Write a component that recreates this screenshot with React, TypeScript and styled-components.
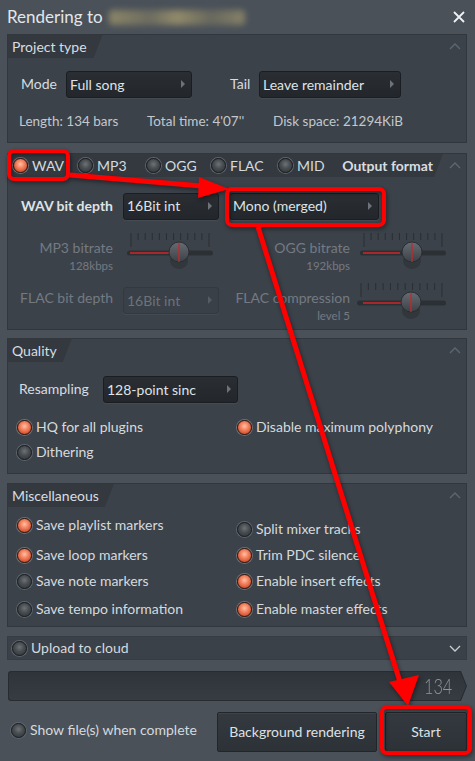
import React, { useId } from "react";
import styled, { createGlobalStyle } from "styled-components";

const FONT = `Lato, "Noto Sans", "DejaVu Sans", sans-serif`;

const GlobalStyle = createGlobalStyle`
  html, body { margin: 0; padding: 0; background: #4a5159; }
  body { font-family: ${FONT}; -webkit-font-smoothing: antialiased; }
  * { box-sizing: border-box; }
`;

const Window = styled.div`
  position: relative;
  width: 475px;
  height: 761px;
  padding: 0 8px 0 7px;
  background: #4a5159;
  color: #d7dce0;
  font-family: ${FONT};
  font-size: 14px;
  display: flex;
  flex-direction: column;
  overflow: hidden;
`;

const TitleBar = styled.header`
  height: 34px;
  flex-shrink: 0;
  display: flex;
  align-items: center;
`;

const Title = styled.h1`
  margin: 0 0 2px;
  font-size: 17px;
  font-weight: 400;
  color: #e2e6ea;
`;

const Blurred = styled.span`
  margin-left: 6px;
  width: 136px;
  height: 15px;
  border-radius: 4px;
  background: linear-gradient(
    90deg,
    rgba(168, 156, 110, 0.7),
    rgba(150, 142, 105, 0.45) 30%,
    rgba(170, 158, 112, 0.75) 50%,
    rgba(140, 132, 100, 0.45) 75%,
    rgba(160, 150, 110, 0.7)
  );
  filter: blur(3px);
`;

const CloseBtn = styled.span`
  margin-left: auto;
  margin-right: 1px;
  width: 14px;
  height: 14px;
  display: flex;
  align-items: center;
  justify-content: center;
`;

const Panel = styled.section<{ $mt?: number; $h: number }>`
  margin-top: ${(p) => p.$mt ?? 0}px;
  height: ${(p) => p.$h}px;
  flex-shrink: 0;
  background: #3c424a;
  border: 1px solid #32373d;
  display: flex;
  flex-direction: column;
`;

const PanelHead = styled.div`
  height: 23px;
  flex-shrink: 0;
  display: flex;
  align-items: stretch;
`;

const Tab = styled.div<{ $grow?: boolean; $pr?: number }>`
  display: flex;
  align-items: center;
  flex: ${(p) => (p.$grow ? 1 : "none")};
  padding: 0 ${(p) => p.$pr ?? 15}px 1px 4px;
  background: #343940;
  clip-path: polygon(0 0, 100% 0, calc(100% - 9px) 100%, 0 100%);
  font-size: 14px;
  color: #d8dde1;
`;

const TabTitle = styled.span<{ $bold?: boolean }>`
  margin-left: ${(p) => (p.$bold ? "auto" : "0")};
  font-weight: ${(p) => (p.$bold ? 700 : 400)};
`;

const Collapse = styled.span`
  margin-left: auto;
  width: 23px;
  display: flex;
  align-items: center;
  justify-content: center;
`;

const Chevron = ({ down }: { down?: boolean }) => (
  <svg width="12" height="7" viewBox="0 0 12 7">
    <polyline
      points={down ? "1,1 6,6 11,1" : "1,6 6,1 11,6"}
      fill="none"
      stroke={down ? "#c9ced3" : "#5e666f"}
      strokeWidth="1.3"
    />
  </svg>
);

/* ---------- form parts ---------- */

const Select = styled.div<{ $w: number; $disabled?: boolean }>`
  width: ${(p) => p.$w}px;
  height: 27px;
  display: flex;
  align-items: center;
  justify-content: space-between;
  padding: 0 6px 1px 3px;
  background: ${(p) =>
    p.$disabled ? "#394047" : "linear-gradient(#2a2e33, #23272b)"};
  border: 1px solid ${(p) => (p.$disabled ? "#333940" : "#1a1d21")};
  box-shadow: 0 1px 0 rgba(255, 255, 255, 0.05);
  border-radius: 3px;
  color: ${(p) => (p.$disabled ? "#6c737a" : "#dfe3e7")};
  font-size: 14px;
  white-space: nowrap;
`;

const Caret = styled.span<{ $disabled?: boolean }>`
  width: 0;
  height: 0;
  border-top: 4px solid transparent;
  border-bottom: 4px solid transparent;
  border-left: 4px solid ${(p) => (p.$disabled ? "#555c63" : "#6c737a")};
`;

const Dropdown = ({
  w,
  value,
  disabled,
}: {
  w: number;
  value: string;
  disabled?: boolean;
}) => (
  <Select $w={w} $disabled={disabled}>
    <span>{value}</span>
    <Caret $disabled={disabled} />
  </Select>
);

const FieldLabel = styled.span<{ $w: number }>`
  width: ${(p) => p.$w}px;
  flex-shrink: 0;
  margin-bottom: 2px;
  color: #d7dce0;
  font-size: 14px;
`;

const ModeRow = styled.div`
  margin-top: 13px;
  height: 27px;
  padding-left: 13px;
  display: flex;
  align-items: center;
`;

const Field = styled.div<{ $ml?: number }>`
  display: flex;
  align-items: center;
  margin-left: ${(p) => p.$ml ?? 0}px;
`;

const InfoRow = styled.div`
  margin-top: 15px;
  padding-left: 11px;
  display: grid;
  grid-template-columns: 128px 126px auto;
  font-size: 13.5px;
  color: #c2c8cd;
`;

/* radios */

const Dot = styled.span<{ $on?: boolean }>`
  width: 15px;
  height: 15px;
  flex-shrink: 0;
  border-radius: 50%;
  border: 1px solid ${(p) => (p.$on ? "#3a1a12" : "#1c1f23")};
  box-shadow: 0 0 0 1px ${(p) => (p.$on ? "#6e6f72" : "#5d646b")};
  background: ${(p) =>
    p.$on
      ? "radial-gradient(circle at 50% 40%, #ffc0a6 0%, #f58764 35%, #d4502f 75%, #a83a22 100%)"
      : "radial-gradient(circle at 50% 40%, #6c7276 0%, #474c51 45%, #2d3135 100%)"};
`;

const Check = styled.label<{ $mt?: number }>`
  display: flex;
  align-items: center;
  gap: 4px;
  height: 22px;
  margin-top: ${(p) => p.$mt ?? 0}px;
  color: #d5dade;
  font-size: 14px;
  white-space: nowrap;
`;

const CheckText = styled.span`
  margin-bottom: 2px;
`;

const Radio = ({
  on,
  label,
  mt,
}: {
  on?: boolean;
  label: string;
  mt?: number;
}) => (
  <Check $mt={mt}>
    <Dot $on={on} />
    <CheckText>{label}</CheckText>
  </Check>
);

const FormatTabs = styled.div`
  display: flex;
  align-items: center;
  margin-left: 1px;
`;

const FormatItem = styled.div<{ $w: number }>`
  width: ${(p) => p.$w}px;
  display: flex;
  align-items: center;
  gap: 4px;
  color: #d5dade;
`;

const FormRow = styled.div<{ $mt: number; $h: number }>`
  margin-top: ${(p) => p.$mt}px;
  height: ${(p) => p.$h}px;
  padding-left: 9px;
  display: grid;
  grid-template-columns: 96px 96px 121px 86px;
  grid-template-rows: ${(p) => p.$h}px;
  column-gap: 10px;
  align-items: center;
`;

const BoldLabel = styled.span`
  justify-self: end;
  margin-bottom: 2px;
  font-weight: 700;
  color: #dfe3e7;
  white-space: nowrap;
`;

const LabelStack = styled.div<{ $mt: number }>`
  align-self: start;
  margin-top: ${(p) => p.$mt}px;
  display: flex;
  flex-direction: column;
  align-items: flex-end;
  white-space: nowrap;
  color: #737a82;
`;

const MainLabel = styled.span`
  line-height: 20px;
  font-size: 14px;
`;

const SubLabel = styled.span`
  margin-top: 1px;
  line-height: 14px;
  font-size: 11.5px;
`;

const SliderBox = styled.div<{ $dx?: number; $dy?: number }>`
  align-self: start;
  margin-left: ${(p) => p.$dx ?? 0}px;
  margin-top: ${(p) => p.$dy ?? 0}px;
  height: 44px;
`;

const Slider = ({
  w,
  knob,
  fill,
}: {
  w: number;
  knob: number;
  fill: [number, number];
}) => {
  const id = useId().replace(/:/g, "");
  const ticks = [];
  const n = 12;
  for (let i = 0; i < n; i++) {
    const x = 4 + (i * (w - 8)) / (n - 1);
    const long = i === 0 || i === n - 1;
    ticks.push(
      <line
        key={i}
        x1={x}
        x2={x}
        y1={1}
        y2={long ? 15 : 8}
        stroke="#2a2f34"
        strokeWidth="1"
      />
    );
  }
  return (
    <svg width={w} height={44} viewBox={`0 0 ${w} 44`}>
      <defs>
        <linearGradient id={`k${id}`} x1="0" y1="0" x2="0" y2="1">
          <stop offset="0" stopColor="#666c73" />
          <stop offset="1" stopColor="#3c4147" />
        </linearGradient>
      </defs>
      {ticks}
      <rect x="0" y="18.5" width={w} height="5" rx="2.5" fill="#2b3035" />
      <rect x={fill[0]} y="20" width={fill[1] - fill[0]} height="2" fill="#a8272b" />
      <rect x={knob - 9} y="20" width="18" height="17" rx="9" fill="#30353a" opacity="0.85" />
      <circle cx={knob} cy="20" r="10" fill={`url(#k${id})`} stroke="#2a2e33" strokeWidth="1" />
      <line x1={knob} x2={knob} y1="11" y2="30" stroke="#c5282b" strokeWidth="1.3" />
    </svg>
  );
};

/* quality / misc */

const ResRow = styled.div`
  margin-top: 14px;
  height: 27px;
  padding-left: 11px;
  display: flex;
  align-items: center;
`;

const TwoCols = styled.div<{ $mt: number }>`
  margin-top: ${(p) => p.$mt}px;
  padding-left: 9px;
  display: grid;
  grid-template-columns: 220px 1fr;
  row-gap: 3px;
`;

const Stack = styled.div`
  display: flex;
  flex-direction: column;
`;

/* bottom */

const UploadRow = styled.div`
  margin-top: 9px;
  height: 24px;
  flex-shrink: 0;
  background: #3b4148;
  border: 1px solid #363c42;
  display: flex;
  align-items: center;
  padding-left: 4px;
`;

const ProgressOuter = styled.div`
  margin-top: 11px;
  margin-left: 1px;
  height: 30px;
  flex-shrink: 0;
  padding: 1px;
  background: #282c31;
  border-radius: 3px 0 0 3px;
  clip-path: polygon(0 0, calc(100% - 6px) 0, 100% 50%, calc(100% - 6px) 100%, 0 100%);
`;

const ProgressInner = styled.div`
  height: 100%;
  border-radius: 3px 0 0 3px;
  background: linear-gradient(#2f343a, #373c42);
  clip-path: polygon(0 0, calc(100% - 6px) 0, 100% 50%, calc(100% - 6px) 100%, 0 100%);
  display: flex;
  align-items: center;
  justify-content: flex-end;
  padding-right: 14px;
`;

const Count = styled.span`
  display: inline-block;
  font-size: 22px;
  font-weight: 300;
  color: #8e959c;
  transform: scaleX(0.74);
  transform-origin: right center;
  margin-bottom: 2px;
`;

const BottomRow = styled.div`
  margin-top: 11px;
  height: 40px;
  flex-shrink: 0;
  display: flex;
  align-items: center;
  padding-left: 4px;
`;

const ShowFiles = styled.div`
  margin-bottom: 3px;
  margin-right: auto;
`;

const Button = styled.button<{ $w: number; $ml: number }>`
  width: ${(p) => p.$w}px;
  height: 40px;
  margin-left: ${(p) => p.$ml}px;
  padding: 0 0 2px;
  background: linear-gradient(#343940, #2d3237);
  border: 1px solid #22262a;
  border-radius: 2px;
  box-shadow: inset 0 1px 0 rgba(255, 255, 255, 0.05);
  color: #dde1e5;
  font-family: ${FONT};
  font-size: 14px;
`;

const Overlay = styled.svg`
  position: absolute;
  left: 0;
  top: 0;
  pointer-events: none;
  filter: drop-shadow(1px 2px 2px rgba(0, 0, 0, 0.45));
`;

const RED = "#ff0000";

export default function App() {
  return (
    <>
      <GlobalStyle />
      <Window>
        <TitleBar>
          <Title>Rendering to</Title>
          <Blurred />
          <CloseBtn>
            <svg width="12" height="12" viewBox="0 0 12 12">
              <path d="M1 1 L11 11 M11 1 L1 11" stroke="#eef1f3" strokeWidth="1.8" />
            </svg>
          </CloseBtn>
        </TitleBar>

        <Panel $h={109}>
          <PanelHead>
            <Tab $pr={16}>
              <TabTitle>Project type</TabTitle>
            </Tab>
            <Collapse>
              <Chevron />
            </Collapse>
          </PanelHead>
          <ModeRow>
            <Field>
              <FieldLabel $w={45}>Mode</FieldLabel>
              <Dropdown w={126} value="Full song" />
            </Field>
            <Field $ml={38}>
              <FieldLabel $w={29}>Tail</FieldLabel>
              <Dropdown w={142} value="Leave remainder" />
            </Field>
          </ModeRow>
          <InfoRow>
            <span>Length: 134 bars</span>
            <span>Total time: 4'07''</span>
            <span>Disk space: 21294KiB</span>
          </InfoRow>
        </Panel>

        <Panel $mt={10} $h={177}>
          <PanelHead>
            <Tab $grow $pr={10}>
              <FormatTabs>
                <FormatItem $w={65}>
                  <Dot $on />
                  <span>WAV</span>
                </FormatItem>
                <FormatItem $w={68}>
                  <Dot />
                  <span>MP3</span>
                </FormatItem>
                <FormatItem $w={65}>
                  <Dot />
                  <span>OGG</span>
                </FormatItem>
                <FormatItem $w={67}>
                  <Dot />
                  <span>FLAC</span>
                </FormatItem>
                <FormatItem $w={50}>
                  <Dot />
                  <span>MID</span>
                </FormatItem>
              </FormatTabs>
              <TabTitle $bold>Output format</TabTitle>
            </Tab>
            <Collapse>
              <Chevron />
            </Collapse>
          </PanelHead>

          <FormRow $mt={16} $h={26}>
            <BoldLabel>WAV bit depth</BoldLabel>
            <Dropdown w={96} value="16Bit int" />
            <Dropdown w={150} value="Mono (merged)" />
          </FormRow>

          <FormRow $mt={13} $h={44}>
            <LabelStack $mt={6}>
              <MainLabel>MP3 bitrate</MainLabel>
              <SubLabel>128kbps</SubLabel>
            </LabelStack>
            <SliderBox $dx={4}>
              <Slider w={86} knob={52} fill={[3, 43]} />
            </SliderBox>
            <LabelStack $mt={6}>
              <MainLabel>OGG bitrate</MainLabel>
              <SubLabel>192kbps</SubLabel>
            </LabelStack>
            <SliderBox>
              <Slider w={86} knob={52} fill={[3, 40]} />
            </SliderBox>
          </FormRow>

          <FormRow $mt={11} $h={27}>
            <LabelStack $mt={1}>
              <MainLabel>FLAC bit depth</MainLabel>
            </LabelStack>
            <Dropdown w={96} value="16Bit int" disabled />
            <LabelStack $mt={1}>
              <MainLabel>FLAC compression</MainLabel>
              <SubLabel>level 5</SubLabel>
            </LabelStack>
            <SliderBox $dx={-3} $dy={-5}>
              <Slider w={89} knob={54} fill={[6, 45]} />
            </SliderBox>
          </FormRow>
        </Panel>

        <Panel $mt={8} $h={136}>
          <PanelHead>
            <Tab $pr={15}>
              <TabTitle>Quality</TabTitle>
            </Tab>
            <Collapse>
              <Chevron />
            </Collapse>
          </PanelHead>
          <ResRow>
            <FieldLabel $w={84}>Resampling</FieldLabel>
            <Dropdown w={135} value="128-point sinc" />
          </ResRow>
          <TwoCols $mt={13}>
            <Radio on label="HQ for all plugins" />
            <Radio on label="Disable maximum polyphony" />
            <Radio label="Dithering" />
          </TwoCols>
        </Panel>

        <Panel $mt={9} $h={144}>
          <PanelHead>
            <Tab $pr={15}>
              <TabTitle>Miscellaneous</TabTitle>
            </Tab>
            <Collapse>
              <Chevron />
            </Collapse>
          </PanelHead>
          <TwoCols $mt={0}>
            <Stack>
              <Radio on label="Save playlist markers" mt={7} />
              <Radio on label="Save loop markers" mt={8} />
              <Radio label="Save note markers" mt={4} />
              <Radio label="Save tempo information" mt={6} />
            </Stack>
            <Stack>
              <Radio label="Split mixer tracks" mt={11} />
              <Radio on label="Trim PDC silence" mt={4} />
              <Radio on label="Enable insert effects" mt={4} />
              <Radio on label="Enable master effects" mt={6} />
            </Stack>
          </TwoCols>
        </Panel>

        <UploadRow>
          <Radio label="Upload to cloud" />
          <Collapse>
            <Chevron down />
          </Collapse>
        </UploadRow>

        <ProgressOuter>
          <ProgressInner>
            <Count>134</Count>
          </ProgressInner>
        </ProgressOuter>

        <BottomRow>
          <ShowFiles>
            <Radio label="Show file(s) when complete" />
          </ShowFiles>
          <Button $w={160} $ml={0}>
            Background rendering
          </Button>
          <Button $w={82} $ml={8}>
            Start
          </Button>
        </BottomRow>

        <Overlay width="475" height="761" viewBox="0 0 475 761">
          <rect x="9" y="151" width="59" height="28" rx="5" fill="none" stroke={RED} strokeWidth="4" />
          <rect x="227" y="189" width="157" height="36" rx="5" fill="none" stroke={RED} strokeWidth="4" />
          <rect x="382" y="707" width="88" height="46" rx="5" fill="none" stroke={RED} strokeWidth="4" />
          <line x1="70" y1="175" x2="202" y2="186" stroke={RED} strokeWidth="5" />
          <polygon points="229,189 199,177 198,198" fill={RED} />
          <line x1="258" y1="227" x2="400" y2="682" stroke={RED} strokeWidth="5" />
          <polygon points="408,706 389,682 419,675" fill={RED} />
        </Overlay>
      </Window>
    </>
  );
}
